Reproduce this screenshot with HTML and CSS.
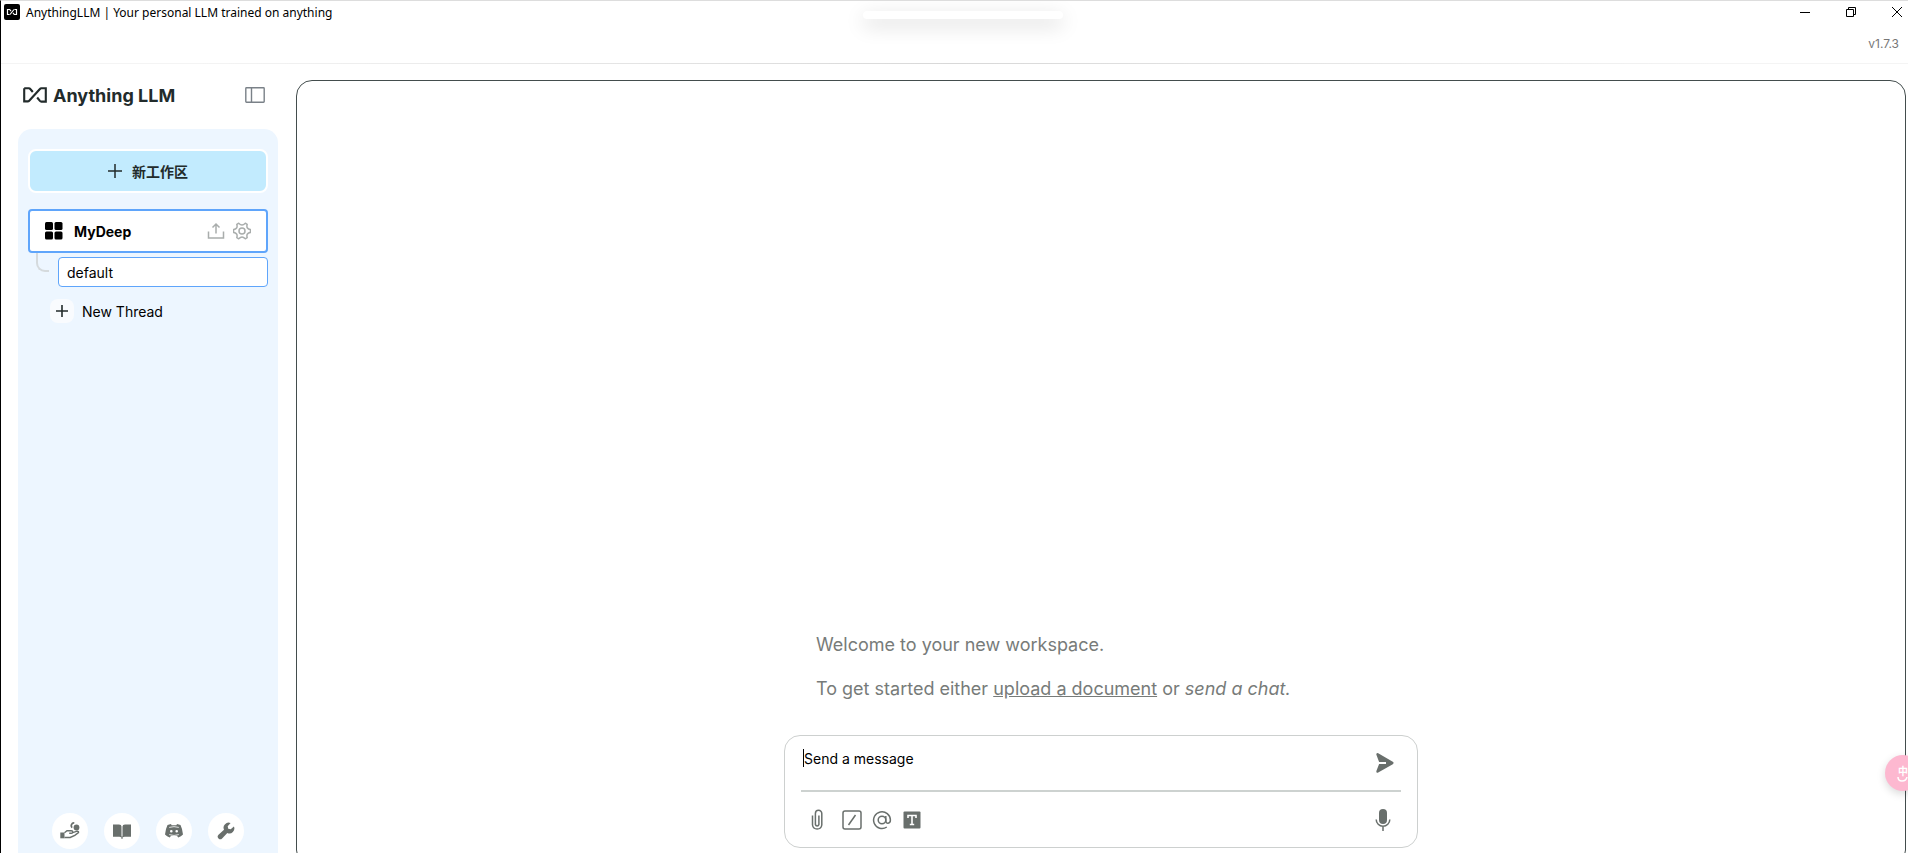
FILE: index.html
```html
<!DOCTYPE html>
<html lang="en">
<head>
    <meta charset="UTF-8">
    <meta name="viewport" content="width=device-width, initial-scale=1.0">
    <title>AnythingLLM | Your personal LLM trained on anything</title>
    <link rel="stylesheet" href="styles.css">
</head>
<body>
    <header class="titlebar">
        <svg class="app-icon" viewBox="0 0 16 16">
            <rect width="16" height="16" rx="2" fill="#000"/>
            <path d="M5.500 10.500h-2v-5h2.200l1.300 1.700M10.500 5.500h2v5h-2.200L9 8.800M6 10.500l4-5" fill="none" stroke="#fff" stroke-width="1.200"/>
        </svg>
        <span class="app-title">AnythingLLM | Your personal LLM trained on anything</span>
        <div class="window-buttons">
            <button aria-label="Minimize"><svg width="12" height="12" viewBox="0 0 12 12"><path d="M1 6.500h10"/></svg></button>
            <button aria-label="Restore"><svg width="12" height="12" viewBox="0 0 12 12"><path d="M1.500 3.500h7v7h-7zM3.500 3.500v-2h7v7h-2"/></svg></button>
            <button aria-label="Close"><svg width="12" height="12" viewBox="0 0 12 12"><path d="M1 1l10 10M11 1L1 11"/></svg></button>
        </div>
        <div class="drag-pill"></div>
    </header>
    <div class="version">v1.7.3</div>

    <div class="layout">
        <aside class="sidebar">
            <div class="brand">
                <svg class="brand-mark" width="24" height="16" viewBox="0 0 24 16">
                    <path d="M1.200 1.200v13.200h3.600q.8 0 1.400-.7L16.900 2q.6-.8 1.500-.8h4.400v13.400h-4.500q-.8 0-1.400-.7l-2.700-3.400M1.200 1.200h4.600q.9 0 1.500.8L9.800 5" fill="none" stroke="#222b2b" stroke-width="2.100"/>
                </svg>
                <span class="brand-name">Anything LLM</span>
                <button class="toggle" aria-label="Toggle sidebar">
                    <svg width="20" height="16" viewBox="0 0 20 16"><path d="M1.500.8h17q.7 0 .7.7v13q0 .7-.7.7h-17q-.7 0-.7-.7v-13q0-.7.7-.7zM6.500 1v14" fill="none" stroke="#7a8188" stroke-width="1.400"/></svg>
                </button>
            </div>

            <div class="side-panel">
                <button class="new-workspace">
                    <svg width="14" height="14" viewBox="0 0 14 14"><path d="M7 0v14M0 7h14" stroke="#222b2b" stroke-width="1.500"/></svg>
                    新工作区
                </button>

                <div class="workspace">
                    <svg width="18" height="18" viewBox="0 0 18 18"><rect width="8" height="8" rx="1.500"/><rect x="9.500" width="8" height="8" rx="1.500"/><rect y="9.500" width="8" height="8" rx="1.500"/><rect x="9.500" y="9.500" width="8" height="8" rx="1.500"/></svg>
                    <a href="#" class="workspace-name">MyDeep</a>
                    <button aria-label="Upload">
                        <svg width="18" height="18" viewBox="0 0 18 18"><path d="M1.500 9.500v6.500h15V9.500M9 11.500V2M5.500 5.500 9 2l3.500 3.500"/></svg>
                    </button>
                    <button aria-label="Settings">
                        <svg width="18" height="18" viewBox="0 0 18 18"><circle cx="9" cy="9" r="3"/><path d="M5.700 1.200Q7.500 3 9 3t3.300-1.800l1.900 1.100q-.7 2.400.2 3.700t3 1.500v3q-2.100.2-3 1.500t-.2 3.700l-1.900 1.100Q10.500 15 9 15t-3.300 1.800l-1.900-1.100q.7-2.400-.2-3.700t-3-1.500v-3q2.100-.2 3-1.500t.2-3.700z" stroke-linejoin="round"/></svg>
                    </button>
                </div>

                <div class="thread-row">
                    <span class="branch"></span>
                    <a href="#" class="thread">default</a>
                </div>

                <button class="new-thread">
                    <span class="plus"><svg width="12" height="12" viewBox="0 0 12 12"><path d="M6 0v12M0 6h12" stroke="#222b2b" stroke-width="1.600"/></svg></span>
                    New Thread
                </button>

                <nav class="side-links">
                    <a href="#" aria-label="Support">
                        <svg width="20" height="18" viewBox="0 0 20 18"><circle cx="16.500" cy="5.500" r="2.900"/><path d="M12.200 5.700A2.700 2.700 0 0 1 14.300 1" fill="none" stroke="#696f6c" stroke-width="1.700"/><path d="M.3 10.500h4.200v5.800H.3z"/><path d="M4.500 10.800 7 8.800h4.300q1.500 0 1.500 1.200t-1.500 1.300H9.200M12.700 10.600l4.500-1.400q1.600-.1 1.300 1.300l-3.700 2.900-4.600 2.100H4.500" fill="none" stroke="#696f6c" stroke-width="1.400"/></svg>
                    </a>
                    <a href="#" aria-label="Docs">
                        <svg width="20" height="18" viewBox="0 0 20 18"><path d="M1 2.500h6q2.500 0 2.500 2v11q-.7-.8-2.300-.8H1zM19 2.500h-6q-2.500 0-2.500 2v11q.7-.8 2.300-.8H19zM9.500 14.500h1V17h-1z"/></svg>
                    </a>
                    <a href="#" aria-label="Discord">
                        <svg width="20" height="18" viewBox="0 0 20 18"><path fill-rule="evenodd" d="M3.500 3 7 2l.6 1.200h4.800L13 2l3.500 1q2 4 2.500 9.500-1.800 2-4.800 3l-1.200-1.800H7l-1.200 1.800q-3-1-4.800-3Q1.500 7 3.500 3zM7.300 8a1.300 1.300 0 1 0 0 2.600 1.300 1.300 0 0 0 0-2.600zM12.700 8a1.300 1.300 0 1 0 0 2.600 1.300 1.300 0 0 0 0-2.600z"/><path d="M5.200 5.400q4.800-1.500 9.600 0M5.200 12.600q4.800 1.700 9.600 0" fill="none" stroke="#fff" stroke-width=".8"/></svg>
                    </a>
                    <a href="#" aria-label="Settings">
                        <svg width="18" height="18" viewBox="0 0 18 18"><path d="M16.900 4.400 13.700 7.300l-2.500-.5-.5-2.500L13.600 1.100A5 5 0 0 0 7 7.700L1.500 12.800a2.400 2.400 0 0 0 3.600 3.600L10.300 11a5 5 0 0 0 6.600-6.600z"/></svg>
                    </a>
                </nav>
            </div>
        </aside>

        <main class="chat">
            <div class="chat-column">
                <div class="welcome">
                    <p>Welcome to your new workspace.</p>
                    <p>To get started either <a href="#">upload a document</a> or <em>send a chat.</em></p>
                </div>
                <form class="prompt">
                    <div class="prompt-input">
                        <span class="caret"></span>
                        <textarea rows="1" placeholder="Send a message" aria-label="Send a message"></textarea>
                        <button type="button" aria-label="Send">
                            <svg width="20" height="22" viewBox="0 0 20 22"><path fill-rule="evenodd" d="M1.300 2.500Q1.300.4 3.200 1.200L17.800 9.800q1.600 1.200 0 2.400L3.200 20.600q-1.900.8-1.900-1.300L4.100 12H11V10H4.100z"/></svg>
                        </button>
                    </div>
                    <div class="prompt-tools">
                        <button type="button" class="attach" aria-label="Attach">
                            <svg width="20" height="22" viewBox="0 0 20 22"><path class="line" d="M5.500 6.500v9.500a4.700 4.700 0 0 0 9.300 0V4.500a3.200 3.200 0 0 0-6.400 0V15.500a1.800 1.800 0 0 0 3.500 0V6.500"/></svg>
                        </button>
                        <button type="button" aria-label="Slash commands">
                            <svg width="20" height="20" viewBox="0 0 20 20"><rect class="line" x="1" y="1" width="18" height="18" rx="2"/><path class="line" d="M13.500 5l-7 10"/></svg>
                        </button>
                        <button type="button" aria-label="Agents">
                            <svg width="20" height="20" viewBox="0 0 20 20"><circle class="line" cx="10" cy="10" r="3.800"/><path class="line" d="M13.800 6v4.500c0 4 4.600 3.500 4.600-.5A8.400 8.400 0 1 0 14.800 17"/></svg>
                        </button>
                        <button type="button" aria-label="Text size">
                            <svg width="20" height="20" viewBox="0 0 20 20"><rect x="1.500" y="1.500" width="17" height="17" rx="1"/><path d="M6 8V5.500h8V8M10 5.500v9M7.800 14.500h4.400" fill="none" stroke="#fff" stroke-width="1.600"/></svg>
                        </button>
                        <button type="button" class="mic" aria-label="Microphone">
                            <svg width="20" height="22" viewBox="0 0 20 22"><rect x="6" y="0" width="8" height="15" rx="4"/><path class="line" d="M3.200 10.500a6.800 6.800 0 0 0 13.600 0M10 17.500V22"/></svg>
                        </button>
                    </div>
                </form>
            </div>
        </main>
    </div>

    <button class="ime" lang="zh">
        <span>中</span>
        <svg width="12" height="5" viewBox="0 0 12 5"><path d="M1 0q0 4 4 4t5-4" fill="none" stroke="#fff" stroke-width="1.500"/></svg>
    </button>
</body>
</html>
```
FILE: styles.css
```css
* {
    box-sizing: border-box;
}

body {
    margin: 0;
    height: 100vh;
    display: flex;
    flex-direction: column;
    overflow: hidden;
    position: relative;
    border-top: 1px solid #ddd;
    border-left: 1px solid #000;
    background-color: #fff;
    color: #000;
    font-family: Inter, "Noto Sans CJK SC", sans-serif;
    font-size: 14px;
}

button {
    padding: 0;
    border: none;
    background: none;
    font: inherit;
    color: inherit;
    cursor: pointer;
}

svg {
    display: block;
}

a {
    color: inherit;
    text-decoration: none;
}

/* window frame */
.titlebar {
    position: relative;
    display: flex;
    align-items: center;
    height: 22px;
    padding: 0 5px 0 3px;
}

.app-icon {
    width: 16px;
    height: 16px;
}

.app-title {
    margin-left: 6px;
    font-family: "Noto Sans", sans-serif;
    font-size: 12px;
}

.window-buttons {
    display: flex;
    gap: 34px;
    margin-left: auto;
}

.window-buttons path {
    fill: none;
    stroke: #000;
}

.drag-pill {
    position: absolute;
    top: 10px;
    left: calc(50% - 92px);
    width: 200px;
    height: 8px;
    border-radius: 4px;
    background-color: #fff;
    box-shadow: 0 6px 20px rgba(0, 0, 0, 0.18);
}

.version {
    height: 41px;
    padding: 13px 9px 0 0;
    border-bottom: 1px solid;
    border-image: linear-gradient(to right, #f4f4f4 10%, #d8d8d8 50%, #f4f4f4 90%) 1;
    text-align: right;
    font-size: 12px;
    line-height: 16px;
    color: #777;
}

.layout {
    flex: 1;
    display: flex;
    min-height: 0;
}

/* sidebar */
.sidebar {
    display: flex;
    flex-direction: column;
    width: 295px;
    padding: 16px 18px 0 17px;
}

.brand {
    display: flex;
    align-items: center;
    height: 30px;
    padding: 0 13px 0 5px;
}

.brand-name {
    margin-left: 6px;
    font-size: 18px;
    font-weight: 700;
    color: #222b2b;
}

.toggle {
    margin-left: auto;
}

.side-panel {
    flex: 1;
    display: flex;
    flex-direction: column;
    margin-top: 19px;
    padding: 20px 10px 4px;
    border-radius: 14px 14px 0 0;
    background-color: #edf6ff;
}

.new-workspace {
    display: flex;
    align-items: center;
    justify-content: center;
    gap: 10px;
    height: 44px;
    border: 2px solid #fff;
    border-radius: 8px;
    background-color: #c2ebfe;
    color: #222b2b;
    font-weight: 700;
}

.workspace {
    display: flex;
    align-items: center;
    gap: 8px;
    height: 44px;
    margin-top: 16px;
    padding: 0 15px;
    border: 2px solid #5fa5fb;
    border-radius: 4px;
    background-color: #fff;
}

.workspace-name {
    flex: 1;
    margin-left: 3px;
    font-weight: 700;
}

.workspace button path,
.workspace button circle {
    fill: none;
    stroke: #a9adac;
    stroke-width: 1.5;
}

.thread-row {
    display: flex;
    height: 34px;
}

.branch {
    width: 13px;
    height: 19px;
    margin: 0 9px 0 8px;
    border-left: 2px solid #d5dadd;
    border-bottom: 2px solid #d5dadd;
    border-bottom-left-radius: 9px;
}

.thread {
    flex: 1;
    margin-top: 4px;
    padding-left: 8px;
    border: 1px solid #5fa5fb;
    border-radius: 4px;
    background-color: #fff;
    line-height: 30px;
}

.new-thread {
    display: flex;
    align-items: center;
    gap: 8px;
    margin: 12px 0 0 22px;
}

.plus {
    display: grid;
    place-items: center;
    width: 24px;
    height: 24px;
    border-radius: 8px;
    background-color: #f9fbfe;
}

.side-links {
    display: flex;
    justify-content: center;
    gap: 16px;
    margin-top: auto;
}

.side-links a {
    display: grid;
    place-items: center;
    width: 36px;
    height: 36px;
    border-radius: 50%;
    background-color: #fff;
}

.side-links svg {
    fill: #696f6c;
}

/* chat */
.chat {
    flex: 1;
    display: flex;
    flex-direction: column;
    align-items: center;
    justify-content: flex-end;
    margin: 16px 2px -13px 0;
    padding-bottom: 17px;
    border: 1px solid #434d4d;
    border-radius: 16px;
}

.chat-column {
    width: 634px;
}

.welcome {
    padding: 0 32px;
    font-size: 18px;
    line-height: 28px;
    color: #777b79;
}

.welcome p {
    margin: 0 0 16px;
}

.welcome a {
    text-decoration: underline;
}

.prompt {
    height: 113px;
    margin-top: 32px;
    padding: 0 16px;
    border: 1px solid #cdd0cf;
    border-radius: 16px;
}

.prompt-input {
    display: flex;
    height: 56px;
    padding: 13px 6px 0 2px;
    border-bottom: 2px solid #cdd2d0;
}

.prompt-input button {
    align-self: flex-start;
    margin-top: 3px;
}

.prompt svg {
    fill: #696f6c;
}

.prompt .line {
    fill: none;
    stroke: #696f6c;
    stroke-width: 1.5;
}

.caret {
    width: 1px;
    height: 18px;
    background-color: #000;
}

textarea {
    flex: 1;
    height: 22px;
    padding: 0;
    border: none;
    outline: none;
    resize: none;
    background: none;
    font: inherit;
    line-height: 20px;
}

textarea::placeholder {
    color: #000;
}

.prompt-tools {
    display: flex;
    align-items: center;
    gap: 10px;
    height: 55px;
    padding: 0 8px 0 6px;
}

.attach {
    margin-right: 5px;
}

.mic {
    margin-left: auto;
}

/* input method badge at the window edge */
.ime {
    position: absolute;
    right: -13px;
    top: 754px;
    display: flex;
    flex-direction: column;
    align-items: center;
    justify-content: center;
    width: 36px;
    height: 36px;
    border-radius: 50%;
    background-color: #fdb8d0;
    box-shadow: 0 3px 8px rgba(0, 0, 0, 0.15);
    color: #fff;
    font-size: 10px;
    line-height: 12px;
    font-weight: 700;
}
```
